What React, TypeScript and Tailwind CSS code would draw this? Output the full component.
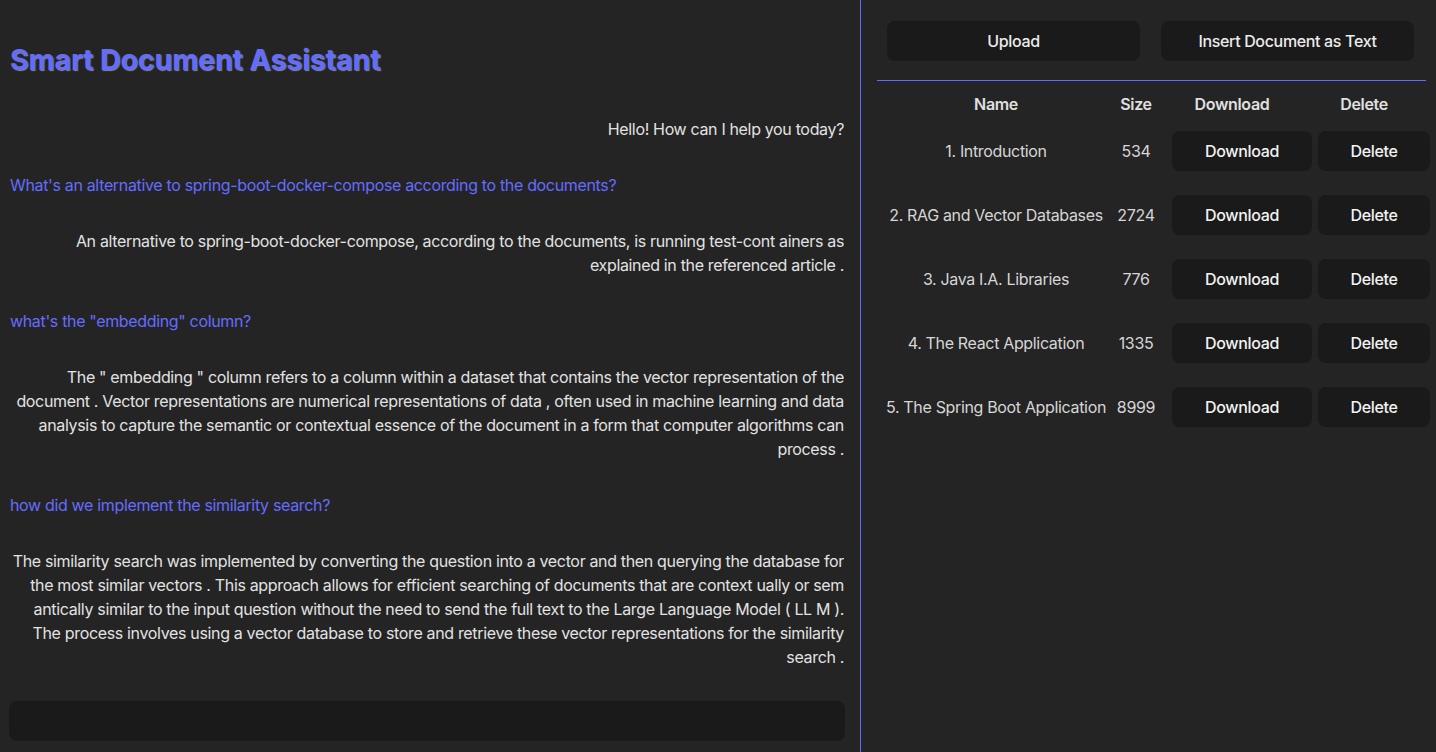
const font = { fontFamily: "Inter, 'Noto Sans', sans-serif" };

type Msg = { role: "user" | "bot"; text: string };

const messages: Msg[] = [
  { role: "bot", text: "Hello! How can I help you today?" },
  { role: "user", text: "What's an alternative to spring-boot-docker-compose according to the documents?" },
  {
    role: "bot",
    text: "An alternative to spring-boot-docker-compose, according to the documents, is running test-cont ainers as explained in the referenced article .",
  },
  { role: "user", text: 'what\'s the "embedding" column?' },
  {
    role: "bot",
    text: 'The " embedding " column refers to a column within a dataset that contains the vector representation of the document . Vector representations are numerical representations of data , often used in machine learning and data analysis to capture the semantic or contextual essence of the document in a form that computer algorithms can process .',
  },
  { role: "user", text: "how did we implement the similarity search?" },
  {
    role: "bot",
    text: "The similarity search was implemented by converting the question into a vector and then querying the database for the most similar vectors . This approach allows for efficient searching of documents that are context ually or sem antically similar to the input question without the need to send the full text to the Large Language Model ( LL M ). The process involves using a vector database to store and retrieve these vector representations for the similarity search .",
  },
];

const docs = [
  { name: "1. Introduction", size: 534 },
  { name: "2. RAG and Vector Databases", size: 2724 },
  { name: "3. Java I.A. Libraries", size: 776 },
  { name: "4. The React Application", size: 1335 },
  { name: "5. The Spring Boot Application", size: 8999 },
];

function Chat() {
  return (
    <div className="w-[861px] shrink-0 h-full border-r border-[#646cff] flex flex-col pl-[9px] pr-[16px] pt-[40px]">
      <h1
        className="h-10 leading-10 text-[28.5px] font-bold text-[#646cff] pl-[1px] tracking-[-0.1px]"
        style={{ textShadow: "1px 1px 1px #8a8a8a" }}
      >
        Smart Document Assistant
      </h1>
      <div className="flex-1 flex flex-col gap-8 mt-[37px] pl-[1px] overflow-hidden tracking-[-0.34px]">
        {messages.map((m, i) => (
          <p
            key={i}
            className={
              m.role === "user"
                ? "text-left text-[#646cff] text-base leading-6"
                : "text-right text-[#e2e2e2] text-base leading-6"
            }
          >
            {m.text}
          </p>
        ))}
      </div>
      <div className="h-10 mb-[11px] rounded-lg bg-[#1a1a1a] w-[836px]" />
    </div>
  );
}

function Documents() {
  return (
    <div className="flex-1 h-full flex flex-col pl-4 pr-[10px] tracking-[-0.34px]">
      <div className="flex gap-[21px] pl-[10px] pt-[21px]">
        <button className="w-[253px] h-10 rounded-lg bg-[#1a1a1a] text-[#ececec] text-base font-medium">
          Upload
        </button>
        <button className="w-[253px] h-10 rounded-lg bg-[#1a1a1a] text-[#ececec] text-base font-medium">
          Insert Document as Text
        </button>
      </div>
      <div className="h-px bg-[#646cff] mt-[19px]" />
      <div className="grid grid-cols-[236px_44px_148px_116px] h-6 mt-[11px] leading-6 font-semibold text-[#e0e0e0] text-base pl-[1px]">
        <div className="text-center">Name</div>
        <div className="text-center">Size</div>
        <div className="text-center">Download</div>
        <div className="text-center">Delete</div>
      </div>
      <div className="flex flex-col mt-[3px]">
        {docs.map((d) => (
          <div
            key={d.name}
            className="grid grid-cols-[236px_44px_148px_116px] h-16 items-center text-base pl-[1px]"
          >
            <div className="text-center text-[#d6d6d6] whitespace-nowrap">{d.name}</div>
            <div className="text-center text-[#d6d6d6]">{d.size}</div>
            <div>
              <button className="ml-[14px] w-[140px] h-10 rounded-lg bg-[#1a1a1a] text-[#f2f2f2] font-medium">
                Download
              </button>
            </div>
            <div>
              <button className="ml-3 w-[112px] h-10 rounded-lg bg-[#1a1a1a] text-[#f2f2f2] font-medium">
                Delete
              </button>
            </div>
          </div>
        ))}
      </div>
    </div>
  );
}

export default function App() {
  return (
    <div className="w-[1436px] h-[752px] bg-[#242424] flex overflow-hidden" style={font}>
      <Chat />
      <Documents />
    </div>
  );
}
